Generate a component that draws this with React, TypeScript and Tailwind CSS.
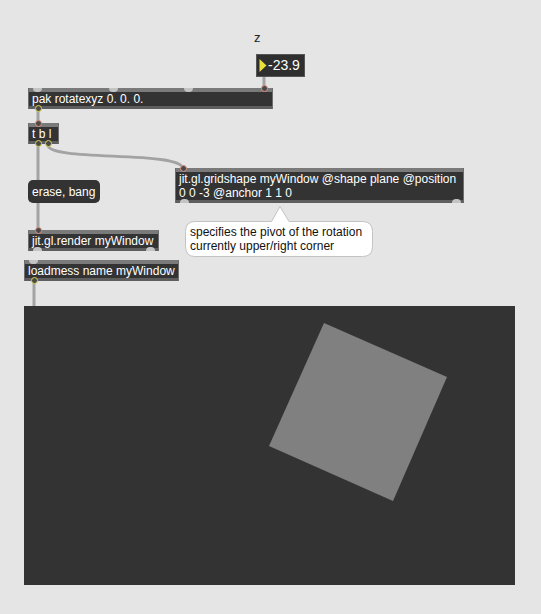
import type { ReactNode } from 'react'

type Port = { x: number; on?: boolean }

interface BoxProps {
  left: number
  top: number
  width: number
  inlets?: Port[]
  outlets?: Port[]
  children: ReactNode
}

// one max object box: grey strips top and bottom, dark text area
function ObjBox({ left, top, width, inlets = [], outlets = [], children }: BoxProps) {
  return (
    <div
      className="absolute flex flex-col bg-[#333333] border-x border-[#6d6d6d]"
      style={{ left, top, width }}
    >
      <div className="h-[4px] bg-[#7a7a7a]" />
      <div className="px-[3px] text-[12px] leading-[14px] text-white whitespace-pre">{children}</div>
      <div className="h-[3px] bg-[#5e5e5e]" />
      {inlets.map((p, i) =>
        p.on ? (
          <span
            key={'i' + i}
            className="absolute top-[-3px] w-[7px] h-[7px] rounded-full border-[1.5px] border-[#e0917f] bg-[#4a4a4a]"
            style={{ left: p.x - 4 }}
          />
        ) : (
          <span
            key={'i' + i}
            className="absolute top-0 w-[9px] h-[4px] rounded-b-full bg-[#c4c4c4]"
            style={{ left: p.x - 5 }}
          />
        )
      )}
      {outlets.map((p, i) =>
        p.on ? (
          <span
            key={'o' + i}
            className="absolute bottom-[-3px] w-[7px] h-[7px] rounded-full border-[1.5px] border-[#d9d24e] bg-[#4a4a4a]"
            style={{ left: p.x - 4 }}
          />
        ) : (
          <span
            key={'o' + i}
            className="absolute bottom-0 w-[9px] h-[4px] rounded-t-full bg-[#c4c4c4]"
            style={{ left: p.x - 5 }}
          />
        )
      )}
    </div>
  )
}

export default function App() {
  return (
    <div className="relative w-[541px] h-[614px] overflow-hidden bg-[#e5e5e5] font-['Liberation_Sans',Arial,sans-serif]">
      {/* patch cords */}
      <svg className="absolute inset-0" width={541} height={614}>
        <g fill="none" stroke="#a3a3a3" strokeWidth={3} strokeLinecap="round">
          <path d="M264 77 L264 90" />
          <path d="M38 110 L38 124" />
          <path d="M38 145 L38 231" />
          <path d="M48 145 C48 162 183 150 183 169" />
          <path d="M34 282 L34 306" />
        </g>
      </svg>

      <div className="absolute left-[254px] top-[31px] text-[13px] leading-[14px] text-[#222]">z</div>

      {/* number box */}
      <div className="absolute left-[256px] top-[54px] w-[49px] h-[23px] flex items-center bg-[#2f2f2f] border border-[#555]">
        <svg width={8} height={13} className="ml-[2px]">
          <path d="M0.5 0 L7.5 6.5 L0.5 13 Z" fill="#e8e23a" />
        </svg>
        <span className="ml-[1px] text-[14px] leading-[15px] text-white">-23.9</span>
      </div>

      <ObjBox
        left={28}
        top={88}
        width={245}
        inlets={[{ x: 9 }, { x: 85 }, { x: 160 }, { x: 236, on: true }]}
        outlets={[{ x: 10, on: true }]}
      >
        pak rotatexyz 0. 0. 0.
      </ObjBox>

      <ObjBox left={28} top={123} width={31} inlets={[{ x: 10, on: true }]} outlets={[{ x: 10, on: true }, { x: 20, on: true }]}>
        t b l
      </ObjBox>

      {/* message box */}
      <div className="absolute left-[28px] top-[180px] w-[72px] h-[23px] flex items-center rounded-[5px] bg-[#333333] px-[4px] text-[12px] text-white">
        erase, bang
      </div>

      <ObjBox
        left={175}
        top={168}
        width={289}
        inlets={[{ x: 8, on: true }]}
        outlets={[{ x: 9 }, { x: 281 }]}
      >
        {'jit.gl.gridshape myWindow @shape plane @position\n0 0 -3 @anchor 1 1 0'}
      </ObjBox>

      {/* comment bubble */}
      <svg className="absolute left-[184px] top-[205px]" width={192} height={54}>
        <path
          d="M11 16.5 L87.5 16.5 L96 1.5 L105 16.5 L178.5 16.5 Q188.5 16.5 188.5 26.5 L188.5 41.5 Q188.5 51.5 178.5 51.5 L11 51.5 Q1.5 51.5 1.5 41.5 L1.5 26.5 Q1.5 16.5 11 16.5 Z"
          fill="#ffffff"
          stroke="#c3c3c3"
          strokeWidth={1}
        />
      </svg>
      <div className="absolute left-[190px] top-[225px] text-[12px] leading-[14px] text-[#111]">
        <div>specifies the pivot of the rotation</div>
        <div>currently upper/right corner</div>
      </div>

      <ObjBox left={28} top={230} width={131} inlets={[{ x: 10, on: true }]} outlets={[{ x: 9 }, { x: 122 }]}>
        jit.gl.render myWindow
      </ObjBox>

      <ObjBox left={24} top={260} width={155} inlets={[{ x: 9 }]} outlets={[{ x: 10, on: true }]}>
        loadmess name myWindow
      </ObjBox>

      {/* jit.pwindow */}
      <div className="absolute left-[24px] top-[306px] w-[491px] h-[279px] bg-[#333333]">
        <svg width={491} height={279}>
          <polygon points="300,17 423,71 369,195 245,140" fill="#808080" />
        </svg>
      </div>
    </div>
  )
}
